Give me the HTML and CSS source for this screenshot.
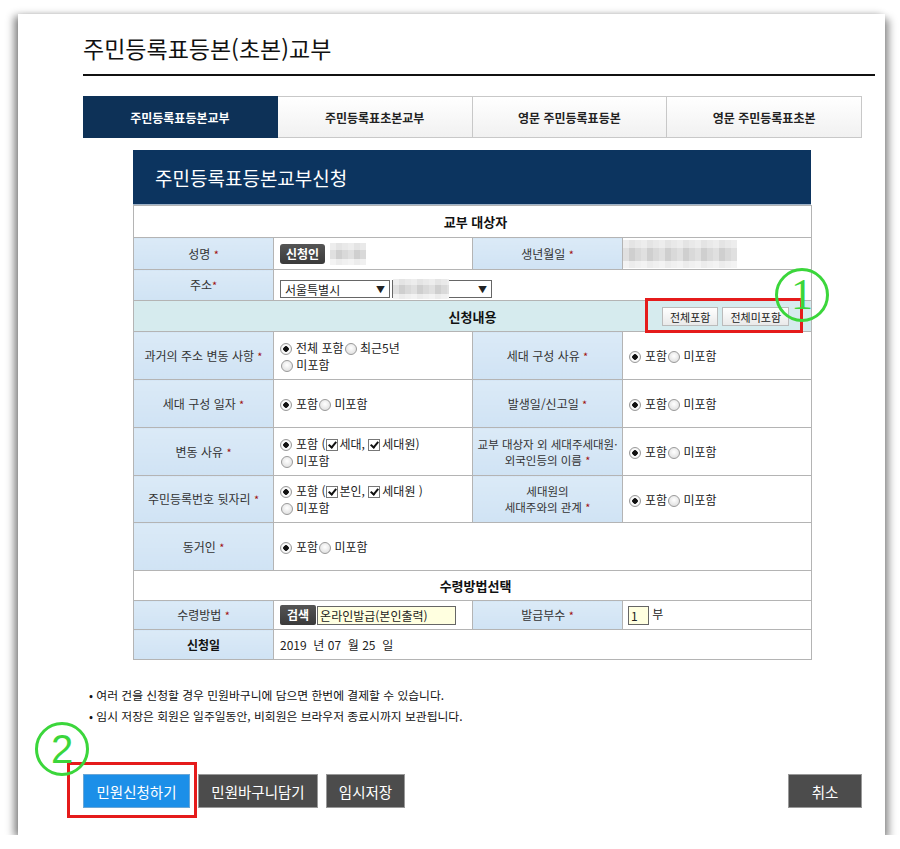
FILE: index.html
```html
<!DOCTYPE html>
<html lang="ko">
<head>
    <meta charset="UTF-8">
    <title>주민등록표등본(초본)교부</title>
    <link rel="stylesheet" href="styles.css">
</head>
<body>
    <div class="paper">
        <h1 class="page-title">주민등록표등본(초본)교부</h1>

        <div class="tabs">
            <div class="tab active">주민등록표등본교부</div>
            <div class="tab">주민등록표초본교부</div>
            <div class="tab">영문 주민등록표등본</div>
            <div class="tab">영문 주민등록표초본</div>
        </div>

        <div class="apply-box">
            <div class="apply-head">주민등록표등본교부신청</div>
            <table class="apply-table">
                <colgroup>
                    <col style="width:140px"><col style="width:199px"><col style="width:150px"><col style="width:189px">
                </colgroup>
                <tr class="h32">
                    <td colspan="4" class="section">교부 대상자</td>
                </tr>
                <tr class="h32">
                    <th>성명 <em>*</em></th>
                    <td><span class="btn-dark">신청인</span><span class="blur blur-name"></span></td>
                    <th>생년월일 <em>*</em></th>
                    <td><span class="blur blur-birth"></span></td>
                </tr>
                <tr class="h31">
                    <th>주소<em>*</em></th>
                    <td colspan="3">
                        <span class="select sel-city">서울특별시<i>▼</i></span><span class="select sel-gu"><span class="blur blur-gu"></span><i>▼</i></span>
                    </td>
                </tr>
                <tr class="h31">
                    <td colspan="4" class="section section-teal">
                        <div class="section-grid">
                            <span></span>
                            <span>신청내용</span>
                            <span class="all-btns"><span class="btn-light">전체포함</span><span class="btn-light">전체미포함</span></span>
                        </div>
                    </td>
                </tr>
                <tr class="h48">
                    <th>과거의 주소 변동 사항 <em>*</em></th>
                    <td><span class="radio on"></span>전체 포함<span class="radio"></span> 최근5년<br><span class="radio"></span> 미포함</td>
                    <th>세대 구성 사유 <em>*</em></th>
                    <td><span class="radio on"></span>포함<span class="radio"></span> 미포함</td>
                </tr>
                <tr class="h48">
                    <th>세대 구성 일자 <em>*</em></th>
                    <td><span class="radio on"></span>포함<span class="radio"></span> 미포함</td>
                    <th>발생일/신고일 <em>*</em></th>
                    <td><span class="radio on"></span>포함<span class="radio"></span> 미포함</td>
                </tr>
                <tr class="h48">
                    <th>변동 사유 <em>*</em></th>
                    <td><span class="radio on"></span>포함 (<span class="check"></span>세대, <span class="check"></span>세대원)<br><span class="radio"></span> 미포함</td>
                    <th class="tight">교부 대상자 외 세대주세대원·<br>외국인등의 이름 <em>*</em></th>
                    <td><span class="radio on"></span>포함<span class="radio"></span> 미포함</td>
                </tr>
                <tr class="h47">
                    <th>주민등록번호 뒷자리 <em>*</em></th>
                    <td><span class="radio on"></span>포함 (<span class="check"></span>본인, <span class="check"></span>세대원 )<br><span class="radio"></span> 미포함</td>
                    <th class="tight">세대원의<br>세대주와의 관계 <em>*</em></th>
                    <td><span class="radio on"></span>포함<span class="radio"></span> 미포함</td>
                </tr>
                <tr class="h48">
                    <th>동거인 <em>*</em></th>
                    <td colspan="3"><span class="radio on"></span>포함<span class="radio"></span> 미포함</td>
                </tr>
                <tr class="h30">
                    <td colspan="4" class="section">수령방법선택</td>
                </tr>
                <tr class="h29">
                    <th>수령방법 <em>*</em></th>
                    <td><span class="btn-dark btn-search">검색</span><span class="field field-method">온라인발급(본인출력)</span></td>
                    <th>발급부수 <em>*</em></th>
                    <td><span class="field field-count">1</span> 부</td>
                </tr>
                <tr class="h30">
                    <th class="bold">신청일</th>
                    <td colspan="3" class="date">2019 &nbsp;년 07 &nbsp;월 25 &nbsp;일</td>
                </tr>
            </table>
        </div>

        <ul class="notes">
            <li>여러 건을 신청할 경우 민원바구니에 담으면 한번에 결제할 수 있습니다.</li>
            <li>임시 저장은 회원은 일주일동안, 비회원은 브라우저 종료시까지 보관됩니다.</li>
        </ul>

        <div class="actions">
            <div class="action-left">
                <span class="btn-big blue w107">민원신청하기</span>
                <span class="btn-big w120">민원바구니담기</span>
                <span class="btn-big w79">임시저장</span>
            </div>
            <span class="btn-big w74">취소</span>
        </div>

        <!-- annotation marks -->
        <div class="mark-box mark-box-1"></div>
        <div class="mark-num mark-num-1">1</div>
        <div class="mark-box mark-box-2"></div>
        <div class="mark-num mark-num-2">2</div>
    </div>
</body>
</html>
```

FILE: styles.css
```css
body {
    margin: 0;
    background: #fff;
    font-family: "Noto Sans CJK KR", "Noto Sans", sans-serif;
    color: #222;
}
.paper {
    position: relative;
    box-sizing: border-box;
    margin: 14px 0 0 18px;
    width: 867px;
    height: 821px;
    padding: 18px 10px 0 65px;
    background: #fff;
    box-shadow: -4px 2px 8px rgba(0, 0, 0, 0.45), 4px 5px 8px rgba(0, 0, 0, 0.4);
}
.page-title {
    margin: 0;
    font-size: 23px;
    font-weight: normal;
    line-height: 32px;
    padding-bottom: 10px;
    border-bottom: 2px solid #111;
    color: #111;
}
.tabs {
    display: flex;
    width: 779px;
    margin-top: 20px;
    height: 42px;
}
.tab {
    flex: 1;
    box-sizing: border-box;
    display: flex;
    align-items: center;
    justify-content: center;
    font-size: 12px;
    font-weight: bold;
    color: #222;
    border: 1px solid #c8c8c8;
    border-left: none;
    background: linear-gradient(#fff, #f1f1f1);
}
.tab:last-child {
    border-right: 1px solid #c8c8c8;
}
.tab.active {
    background: #0d3157;
    border-color: #0d3157;
    color: #fff;
}
.apply-box {
    width: 678px;
    margin: 12px 0 0 50px;
}
.apply-head {
    height: 55px;
    box-sizing: border-box;
    padding-left: 22px;
    display: flex;
    align-items: center;
    background: #0c345f;
    color: #fff;
    font-size: 19px;
    border-bottom: 1px solid #9fb3c8;
}
.apply-table {
    width: 678px;
    border-collapse: collapse;
    table-layout: fixed;
    font-size: 12px;
}
.apply-table td, .apply-table th {
    border: 1px solid #b4b4b4;
    padding: 0 0 0 6px;
    vertical-align: middle;
    line-height: 17px;
}
.apply-table th {
    background: linear-gradient(#dbeaf7, #d0e3f4);
    font-weight: normal;
    color: #333;
    text-align: center;
    padding: 0;
}
.apply-table th.bold {
    font-weight: bold;
    color: #111;
}
.apply-table th.tight {
    font-size: 11.5px;
    line-height: 16px;
}
.apply-table em {
    font-style: normal;
    color: #a01010;
    font-size: 11px;
}
.h32 { height: 32px; }
.h31 { height: 31px; }
.h30 { height: 30px; }
.h29 { height: 29px; }
.h48 { height: 48px; }
.h47 { height: 47px; }
.section {
    text-align: center;
    font-weight: bold;
    font-size: 13px;
    color: #111;
}
.apply-table .section-teal {
    background: #d6ebee;
    padding: 0;
}
.section-grid {
    display: grid;
    grid-template-columns: 1fr auto 1fr;
    align-items: center;
}
.all-btns {
    display: flex;
    justify-content: flex-end;
    gap: 4px;
    padding-right: 22px;
}
.btn-light {
    display: inline-block;
    height: 19px;
    line-height: 18px;
    padding: 0 7px;
    box-sizing: border-box;
    border: 1px solid #bbb;
    background: linear-gradient(#fff, #e9e9e9);
    font-size: 11px;
    font-weight: normal;
    color: #222;
}
.btn-dark {
    display: inline-block;
    vertical-align: middle;
    height: 20px;
    line-height: 20px;
    padding: 0 6px;
    border-radius: 3px;
    background: linear-gradient(#555, #3a3a3a);
    color: #fff;
    font-weight: bold;
    font-size: 12px;
}
.btn-search {
    border-radius: 2px;
    padding: 0 7px;
}
.blur {
    display: inline-block;
    vertical-align: middle;
    background:
        linear-gradient(90deg, rgba(255,255,255,0.35) 0 33%, transparent 33% 66%, rgba(255,255,255,0.2) 66%),
        linear-gradient(#e4e4e4 0 30%, #cfcfcf 30% 75%, #ececec 75%);
    background-size: 18px 100%, 100% 100%;
}
.blur-name {
    width: 36px;
    height: 22px;
    margin-left: 5px;
}
.blur-birth {
    width: 114px;
    height: 28px;
    margin-left: -6px;
}
.blur-gu {
    width: 56px;
    height: 20px;
    margin-left: -4px;
}
.select {
    display: inline-flex;
    vertical-align: middle;
    align-items: center;
    justify-content: space-between;
    box-sizing: border-box;
    height: 18px;
    border: 1px solid #666;
    padding: 0 4px;
    font-size: 12px;
    margin-top: 8px;
}
.select i {
    font-style: normal;
    font-size: 9px;
}
.sel-city {
    width: 110px;
}
.sel-gu {
    width: 100px;
    margin-left: 2px;
}
.radio {
    display: inline-block;
    vertical-align: -2px;
    box-sizing: border-box;
    width: 12px;
    height: 12px;
    margin: 0 0 0 1px;
    border-radius: 50%;
    border: 1px solid #9a9a9a;
    background: radial-gradient(circle at 50% 40%, #fff, #d8d8d8);
}
.radio.on {
    background: radial-gradient(circle, #111 0 2.5px, #fff 3px, #e2e2e2);
    margin: 0 4px 0 0;
}
.check {
    display: inline-block;
    vertical-align: -2px;
    box-sizing: border-box;
    width: 12px;
    height: 12px;
    margin-right: 2px;
    border: 1px solid #777;
    background: #fff;
    position: relative;
}
.check::after {
    content: "";
    position: absolute;
    left: 3px;
    top: 0;
    width: 3px;
    height: 6px;
    border: solid #111;
    border-width: 0 2px 2px 0;
    transform: rotate(40deg);
}
.field {
    display: inline-block;
    vertical-align: middle;
    box-sizing: border-box;
    height: 19px;
    line-height: 17px;
    border: 1px solid #666;
    background: #ffffe0;
    font-size: 12px;
    padding: 0 2px;
}
.field-method {
    width: 139px;
    margin-left: 1px;
}
.field-count {
    width: 21px;
    margin-left: -1px;
}
.date {
    font-size: 12px;
    color: #222;
}
.notes {
    list-style: none;
    margin: 24px 0 0 6px;
    padding: 0;
    font-size: 11.8px;
    line-height: 21px;
    color: #111;
}
.notes li::before {
    content: "• ";
}
.actions {
    display: flex;
    justify-content: space-between;
    width: 779px;
    margin-top: 48px;
}
.action-left {
    display: flex;
    gap: 8px;
}
.btn-big {
    box-sizing: border-box;
    height: 34px;
    display: flex;
    align-items: center;
    justify-content: center;
    background: #4c4c4c;
    border: 1px solid #999;
    color: #fff;
    font-size: 14.5px;
}
.btn-big.blue {
    background: #1c8fe8;
    border-color: #6aa6d6;
}
.w107 { width: 107px; }
.w120 { width: 120px; }
.w79 { width: 79px; }
.w74 { width: 74px; }
.mark-box {
    position: absolute;
    border: 3px solid #e51b1b;
    box-sizing: border-box;
}
.mark-box-1 {
    left: 627px;
    top: 284px;
    width: 158px;
    height: 35px;
}
.mark-box-2 {
    left: 49px;
    top: 748px;
    width: 130px;
    height: 56px;
}
.mark-num {
    position: absolute;
    box-sizing: border-box;
    width: 54px;
    height: 54px;
    border: 3px solid #3bd63b;
    border-radius: 50%;
    color: #3bd63b;
    font-family: "Liberation Serif", serif;
    font-size: 44px;
    line-height: 48px;
    text-align: center;
}
.mark-num-1 {
    left: 757px;
    top: 254px;
}
.mark-num-2 {
    left: 17px;
    top: 708px;
    font-family: "Liberation Sans", sans-serif;
    font-size: 40px;
}
```
